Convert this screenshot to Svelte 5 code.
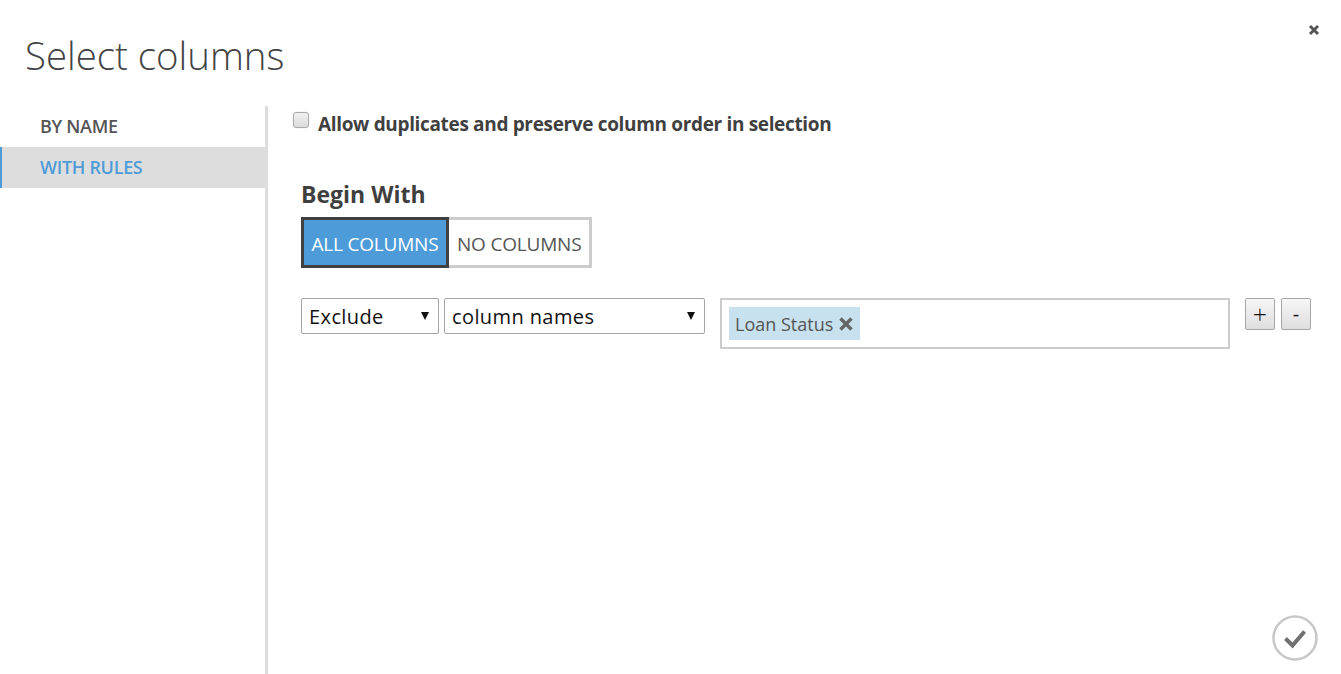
<script>
  let ruleMode = $state('all');
  let tags = $state(['Loan Status']);
</script>

<div class="dialog">
  <button type="button" class="close" aria-label="Close">
    <svg width="12" height="12" viewBox="0 0 12 12"><path d="M2 2l8 8M10 2l-8 8" stroke="#555" stroke-width="3" /></svg>
  </button>

  <h1>Select columns</h1>

  <div class="body">
    <nav class="tabs">
      <button type="button" class="tab">BY NAME</button>
      <button type="button" class="tab is-selected">WITH RULES</button>
    </nav>

    <main class="content">
      <label class="allow">
        <span class="checkbox"></span>
        <span>Allow duplicates and preserve column order in selection</span>
      </label>

      <h2>Begin With</h2>
      <div class="toggle">
        <button type="button" class="mode" class:is-active={ruleMode === 'all'} onclick={() => (ruleMode = 'all')}>ALL COLUMNS</button>
        <button type="button" class="mode" class:is-active={ruleMode === 'none'} onclick={() => (ruleMode = 'none')}>NO COLUMNS</button>
      </div>

      <div class="rule">
        <div class="select exclude">Exclude<span class="arrow"></span></div>
        <div class="select names">column names<span class="arrow"></span></div>
        <div class="tagbox">
          {#each tags as tag}
            <span class="tag">
              {tag}
              <svg width="16" height="16" viewBox="0 0 16 16"><path d="M2.5 2.5l11 11M13.5 2.5l-11 11" stroke="#666" stroke-width="3.4" /></svg>
            </span>
          {/each}
        </div>
        <button type="button" class="step plus">+</button>
        <button type="button" class="step">-</button>
      </div>
    </main>
  </div>

  <button type="button" class="ok" aria-label="OK">
    <svg width="46" height="46" viewBox="0 0 46 46">
      <circle cx="23" cy="23" r="21.5" fill="none" stroke="#c8c8c8" stroke-width="2.5" />
      <path d="M13.5 23.5l7 7 12-14" fill="none" stroke="#707070" stroke-width="4" />
    </svg>
  </button>
</div>

<style>
  :global(body) {
    margin: 0;
    background: #fff;
  }

  .dialog {
    position: relative;
    height: 674px;
    overflow: hidden;
    font-family: "Open Sans", "Noto Sans", sans-serif;
    color: #3f3f3f;
  }

  button {
    font-family: inherit;
    cursor: pointer;
  }

  .close {
    position: absolute;
    top: 24px;
    right: 21px;
    padding: 0;
    border: 0;
    background: none;
    line-height: 0;
  }

  h1 {
    margin: 0;
    height: 106px;
    padding: 30px 0 0 25px;
    box-sizing: border-box;
    font-size: 38.4px;
    font-weight: 300;
    line-height: 50px;
    color: #444;
  }

  .body {
    display: flex;
    height: 568px;
  }

  .tabs {
    width: 268px;
    flex: none;
    box-sizing: border-box;
    border-right: 3px solid #ddd;
    display: flex;
    flex-direction: column;
  }

  .tab {
    height: 41px;
    width: 268px;
    flex: none;
    padding: 0 0 2px 38px;
    border: 0;
    border-left: 2px solid transparent;
    background: none;
    color: #555;
    font-size: 18px;
    font-weight: 600;
    letter-spacing: -0.3px;
    text-align: left;
  }

  .tab.is-selected {
    background: #ddd;
    border-left-color: #4d9cd9;
    color: #4d9cd9;
  }

  .content {
    flex: 1;
    padding-left: 25px;
    min-width: 0;
  }

  .allow {
    display: flex;
    align-items: flex-start;
    height: 74px;
    margin-left: 0;
    font-size: 19px;
    font-weight: 700;
    letter-spacing: -0.34px;
    line-height: 24px;
    padding-top: 6px;
    box-sizing: border-box;
  }

  .checkbox {
    width: 14px;
    height: 14px;
    margin: 0 9px 0 0;
    border: 1px solid #a9a9a9;
    border-radius: 3px;
    background: linear-gradient(#f0f0f0, #dcdcdc);
    box-shadow: 0 0 1px #bbb;
  }

  h2 {
    margin: 0 0 8px 8px;
    font-size: 23px;
    font-weight: 700;
    line-height: 29px;
    height: 29px;
  }

  .toggle {
    display: flex;
    margin-left: 8px;
  }

  .mode {
    height: 51px;
    box-sizing: border-box;
    padding: 2px 8px 0;
    border: 3px solid #ccc;
    border-left: 0;
    background: #fff;
    color: #555;
    font-size: 19px;
    letter-spacing: -0.2px;
    white-space: nowrap;
  }

  .mode.is-active {
    width: 148px;
    padding: 2px 0 0;
    border: 3px solid #404040;
    background: #4d9cd9;
    color: #fff;
  }

  .rule {
    display: flex;
    align-items: flex-start;
    margin: 30px 0 0 8px;
  }

  .select {
    position: relative;
    box-sizing: border-box;
    height: 36px;
    padding-left: 7px;
    border: 1px solid #a6a6a6;
    border-radius: 2px;
    color: #111;
    font-size: 20px;
    letter-spacing: 0.4px;
    line-height: 35px;
  }

  .exclude {
    width: 138px;
  }

  .names {
    width: 261px;
    margin-left: 5px;
  }

  .arrow {
    position: absolute;
    top: 13px;
    right: 9px;
    border-left: 4.5px solid transparent;
    border-right: 4.5px solid transparent;
    border-top: 8px solid #111;
  }

  .tagbox {
    box-sizing: border-box;
    width: 510px;
    height: 51px;
    margin-left: 15px;
    padding: 7px 7px;
    border: 2px solid #ccc;
    display: flex;
    align-items: flex-start;
  }

  .tag {
    display: flex;
    align-items: center;
    gap: 5px;
    height: 33px;
    padding: 0 6px 0 6px;
    background: #c8e1ee;
    color: #555;
    font-size: 18px;
    letter-spacing: 0;
  }

  .step {
    box-sizing: border-box;
    width: 30px;
    height: 32px;
    padding: 0;
    border: 1px solid #a6a6a6;
    border-radius: 2px;
    background: linear-gradient(#f6f6f6, #dedede);
    color: #111;
    font-size: 20px;
    line-height: 26px;
    margin-left: 6px;
  }

  .plus {
    margin-left: 15px;
    font-size: 25px;
    font-weight: 300;
  }

  .ok {
    position: absolute;
    top: 615px;
    left: 1272px;
    padding: 0;
    border: 0;
    background: none;
    line-height: 0;
  }
</style>
